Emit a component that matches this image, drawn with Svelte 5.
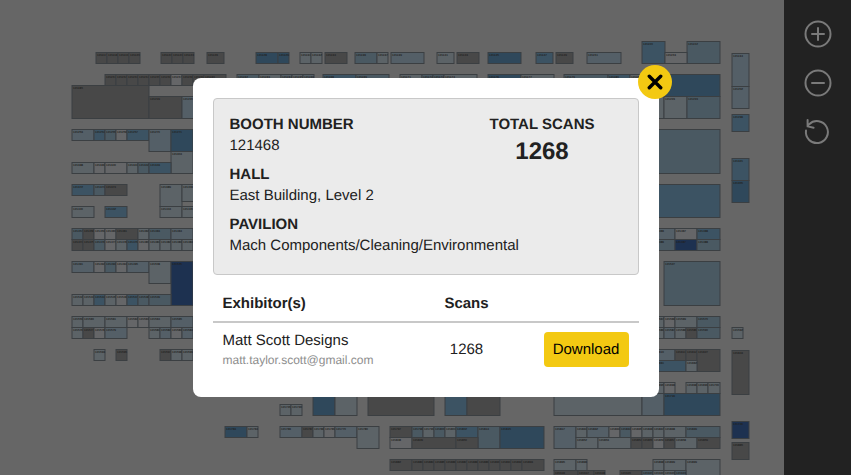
<script>
  // Fill colours of the booths, from empty (k) to most visited (n).
  const fills = {
    k: '#484848',
    g: '#656668',
    l: '#5c6367',
    a: '#545f67',
    b: '#4a5962',
    c: '#3c5363',
    d: '#2f485b',
    n: '#1d3150'
  };

  // Each strip: left, top, height, then the booths as fill + width ("_" is an aisle).
  const strips = [
    [642, 41, 22, 'c23 _22 b33'],
    [96, 52, 11, 'k11 k11 k11 k11 _21 k11 k11 k11 _13 k17 _32 d22 d11 _11 l11 l11 _3 k22 _8 b22 l11 _3 a33 _13 l17 _3 k22 _9 d33 _15 c17 _3 k17 _14 a34 _44 g22'],
    [732, 53, 33, 'a17'],
    [105, 74, 11, 'k11 k11 k11 k11 k11 k11 g11 k11 k11 k22 _11 b22 l22 a11 l11 a11 _9 c33 b33 _11 l22 b11 b11 l33 _11 d33 l33 _10 b44 c22 l22'],
    [642, 74, 22, 'd78'],
    [72, 85, 33, 'k77'],
    [732, 86, 22, 'a17'],
    [149, 96, 22, 'k33 a22 _438 l22 l23 b33'],
    [732, 114, 17, 'c17'],
    [72, 129, 11, 'a22 c11 b11 g11 c22'],
    [149, 129, 22, 'a22 d22'],
    [620, 129, 44, 'b100'],
    [171, 151, 22, 'l22'],
    [732, 158, 22, 'c17'],
    [72, 162, 11, 'l22 g11 g22 l11 b11 c22'],
    [732, 180, 22, 'd17'],
    [72, 184, 11, 'c22 b11 k22'],
    [160, 184, 22, 'l22'],
    [182, 184, 17, 'l22'],
    [630, 184, 33, 'c90'],
    [72, 206, 11, 'l22 _11 c22 _33 l22 l22'],
    [72, 228, 11, 'b11 k11 g11 g11 k22 l11 b22 a22 _460 a22 g22 c23'],
    [72, 239, 11, 'k11 k11 b11 g11 l11 c11 g11 l11 l11 l11 l11 _460 b22 n22 b23'],
    [72, 261, 11, 'a22 g11 b11 g11 a22'],
    [149, 261, 22, 'l22'],
    [171, 261, 44, 'n22 _471 b56'],
    [72, 294, 11, 'l11 l11 c11 l11 g11 c11 b11 b22'],
    [72, 316, 11, 'l11 l22 l22 g11 g11 l22 a22 _460 l11 g11 l22 b23'],
    [72, 327, 11, 'l11 k11 g11 a22 _22 l11 a11 g11 a11 _460 l11 a11 l11 k11 b23 _12 l11'],
    [94, 349, 11, 'l11 _11 k11 _33 k11 l11 l11'],
    [653, 349, 11, 'a22 k11 k11'],
    [697, 349, 22, 'k23'],
    [732, 350, 44, 'k17'],
    [653, 360, 11, 'c33 l11'],
    [368, 371, 44, 'k66 _11 c22 k33 _54 l88'],
    [653, 382, 11, 'l11 g11 _11 l11 l11 l12'],
    [313, 393, 22, 'd22 l22 _285 a22 d56'],
    [280, 404, 11, 'l11 l11'],
    [732, 421, 17, 'n17'],
    [225, 426, 11, 'd22 l11 _22 a22 k11 l11 g11 a22'],
    [357, 426, 22, 'l22'],
    [390, 426, 11, 'k22 b11 l11 b11 l11 c22'],
    [478, 426, 22, 'b22 d44 _10 a22'],
    [576, 426, 11, 'l11 a22 g11 b11 g11 l11 l11 l22 b34'],
    [390, 437, 11, 'g22 k44 k22 _98 l22 l33 k11 k11 g11 k11 l22 k23'],
    [732, 442, 17, 'k17'],
    [390, 459, 11, 'k22 k11 k11 k11 k11 k11 k11 k11 k11 k11 k11 k22 _10 l22 l11 _66 l11 l22'],
    [686, 459, 22, 'l34'],
    [554, 470, 11, 'k24 k16 k11 _15 k22 b11 l11 l11 b11']
  ];

  const booths = strips.flatMap(([left, y, h, list], row) => {
    let x = left;
    return list.split(' ').flatMap((item, i) => {
      const w = Number(item.slice(1));
      const booth = { x, y, w, h, fill: fills[item[0]], id: 121100 + row * 17 + i };
      x += w;
      return item[0] === '_' ? [] : [booth];
    });
  });

  const details = [
    ['BOOTH NUMBER', '121468'],
    ['HALL', 'East Building, Level 2'],
    ['PAVILION', 'Mach Components/Cleaning/Environmental']
  ];

  const exhibitors = [
    { name: 'Matt Scott Designs', email: 'matt.taylor.scott@gmail.com', scans: 1268 }
  ];
</script>

<div class="page">
  <main>
    <svg class="map" viewBox="0 0 784 475" preserveAspectRatio="xMidYMid slice" aria-label="Floor plan">
      {#each booths as b}
        <rect x={b.x} y={b.y + 0.5} width={b.w} height={b.h} fill={b.fill} />
        <text x={b.x + 1} y={b.y + 4}>{b.id}</text>
      {/each}
    </svg>
  </main>

  <aside>
    <button aria-label="Zoom in">
      <svg viewBox="0 0 28 28"><circle cx="14" cy="14" r="12.5" /><path d="M8 14H20M14 8V20" /></svg>
    </button>
    <button aria-label="Zoom out">
      <svg viewBox="0 0 28 28"><circle cx="14" cy="14" r="12.5" /><path d="M8 14H20" /></svg>
    </button>
    <button aria-label="Reset view">
      <svg viewBox="0 0 28 28"><path d="M2 12.5A11 11 0 1 0 5.2 6.2L3.6 8.2M3.6 2V8.4L9.6 9.8" /></svg>
    </button>
  </aside>

  <div class="overlay">
    <div class="modal" role="dialog" aria-modal="true" aria-label="Booth 121468">
      <button class="close" aria-label="Close">
        <svg viewBox="0 0 14 14"><path d="M2 2L12 12M12 2L2 12" /></svg>
      </button>

      <section class="summary">
        <dl>
          {#each details as [label, value]}
            <div>
              <dt>{label}</dt>
              <dd>{value}</dd>
            </div>
          {/each}
        </dl>
        <dl class="total">
          <dt>TOTAL SCANS</dt>
          <dd>1268</dd>
        </dl>
      </section>

      <table>
        <thead>
          <tr><th class="who">Exhibitor(s)</th><th class="scans">Scans</th><th class="action"></th></tr>
        </thead>
        <tbody>
          {#each exhibitors as e}
            <tr>
              <td class="who">{e.name}<small>{e.email}</small></td>
              <td class="scans">{e.scans}</td>
              <td class="action"><button class="download">Download</button></td>
            </tr>
          {/each}
        </tbody>
      </table>
    </div>
  </div>
</div>

<style>
  :global(body) {
    margin: 0;
    background: #666;
  }
  .page {
    position: relative;
    display: flex;
    height: 100vh;
    overflow: hidden;
    font: 15px/21px 'Liberation Sans', Arial, sans-serif;
    text-rendering: geometricPrecision;
    color: #212121;
  }
  button {
    border: 0;
    padding: 0;
    font: inherit;
    text-rendering: inherit;
    cursor: pointer;
  }
  main {
    flex: 1;
    min-width: 0;
    background: #666;
  }
  .map {
    display: block;
    width: 100%;
    height: 100%;
  }
  .map rect {
    stroke: #3b3f42;
    stroke-width: 1;
  }
  .map text {
    font-size: 3px;
    font-weight: bold;
    fill: #222;
  }
  aside {
    box-sizing: border-box;
    flex: 0 0 67px;
    display: flex;
    flex-direction: column;
    align-items: center;
    gap: 21px;
    padding-top: 20px;
    background: #222;
  }
  aside button {
    width: 28px;
    height: 28px;
    background: none;
  }
  aside svg {
    display: block;
    fill: none;
    stroke: #7a7a7a;
    stroke-width: 2;
    stroke-linecap: round;
    stroke-linejoin: round;
  }
  .overlay {
    position: absolute;
    inset: 0;
    display: flex;
    align-items: center;
    justify-content: center;
  }
  .modal {
    position: relative;
    box-sizing: border-box;
    width: 466px;
    max-width: 90%;
    padding: 20px 20px 24px;
    border-radius: 8px;
    background: #fff;
  }
  .close {
    position: absolute;
    top: -13px;
    right: -13px;
    width: 34px;
    height: 34px;
    display: flex;
    align-items: center;
    justify-content: center;
    border-radius: 50%;
    background: #f3c912;
  }
  .close svg {
    width: 16px;
    height: 16px;
    stroke: #000;
    stroke-width: 3;
    stroke-linecap: round;
  }
  .summary {
    display: flex;
    justify-content: space-between;
    padding: 15px 43px 18px 16px;
    border: 1px solid #c8c8c8;
    border-radius: 4px;
    background: #ebebeb;
  }
  dl {
    display: flex;
    flex-direction: column;
    gap: 8px;
    margin: 0;
  }
  dt {
    font-weight: bold;
  }
  dd {
    margin: 0;
  }
  dl:first-child {
    width: 0;
    white-space: nowrap;
  }
  .total {
    gap: 4px;
    text-align: center;
  }
  .total dd {
    font-size: 24px;
    line-height: 26px;
    font-weight: bold;
  }
  table {
    width: 100%;
    margin-top: 12px;
    border-collapse: collapse;
    table-layout: fixed;
  }
  th {
    height: 32px;
    padding: 0 10px 2px;
    border-bottom: 2px solid #c8c8c8;
  }
  td {
    padding: 7px 10px 4px;
  }
  .who {
    width: 167px;
    text-align: left;
  }
  .scans {
    text-align: center;
  }
  .action {
    width: 85px;
    text-align: right;
  }
  small {
    display: block;
    font-size: 12px;
    line-height: 18px;
    color: #8e8e8e;
  }
  .download {
    width: 85px;
    height: 35px;
    border-radius: 4px;
    background: #f3c912;
    color: #000;
  }
</style>
